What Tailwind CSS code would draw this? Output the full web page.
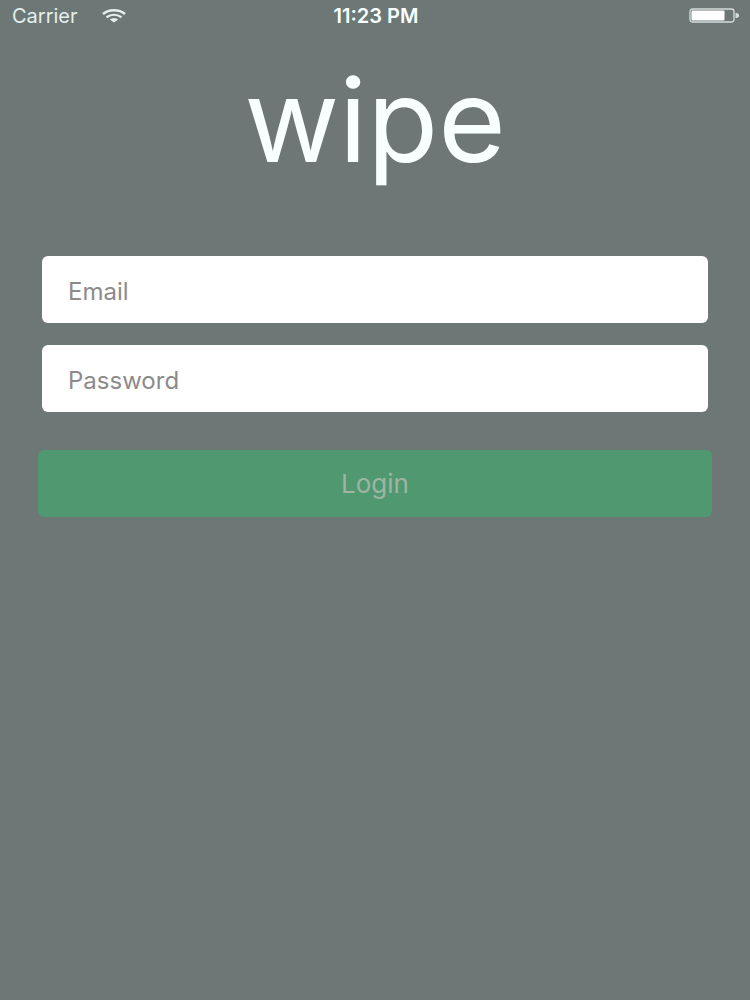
<!DOCTYPE html>
<html lang="en">

<head>
  <meta charset="UTF-8">
  <meta name="viewport" content="width=device-width, initial-scale=1">
  <title>wipe</title>
  <script src="https://cdn.jsdelivr.net/npm/@tailwindcss/browser@4"></script>
</head>

<body class="min-h-screen bg-[#6d7876] font-['Inter','Liberation_Sans',sans-serif] text-[#f8ffff]">

  <!-- Status bar -->
  <header class="grid h-8 grid-cols-3 items-center pl-3 pr-2.5 text-xl leading-8">
    <div class="flex items-center gap-6 text-[#e4efec]">
      <span>Carrier</span>
      <svg class="h-[14px] w-6" viewBox="0 0 24 14" fill="none" stroke="currentColor" stroke-width="2.4" aria-hidden="true">
        <path d="M1 5C7 0 17 0 23 5" />
        <path d="M4.500 8.300c4.500-3.200 10.500-3.200 15 0" />
        <path d="M12 13.600 7.800 10.600c2.200-1.800 6.200-1.800 8.400 0z" fill="currentColor" stroke="none" />
      </svg>
    </div>
    <span class="text-center font-semibold">11:23 PM</span>
    <svg class="h-4 w-[51px] justify-self-end" viewBox="0 0 51 16" aria-hidden="true">
      <rect x="1" y="1" width="44" height="13" rx="2.5" fill="none" stroke="#d3dcda" stroke-width="1.3" />
      <rect x="2.5" y="2.5" width="33" height="10" rx="1" fill="#fff" />
      <path d="M46.500 5c3 0 3.500 1.200 3.500 2.500s-.5 2.500-3.500 2.500z" fill="#d3dcda" />
    </svg>
  </header>

  <!-- Login -->
  <main class="px-[38px] pt-8">
    <h1 class="text-center text-[116px] leading-[112px]">wipe</h1>
    <form class="mt-20">
      <div class="flex flex-col gap-[22px] px-1">
        <input type="email" aria-label="Email" placeholder="Email" class="h-[67px] w-full rounded-md bg-white px-[26px] pt-1 text-2xl text-gray-800 outline-none placeholder:text-[#8d8a8c]">
        <input type="password" aria-label="Password" placeholder="Password" class="h-[67px] w-full rounded-md bg-white px-[26px] pt-1 text-2xl text-gray-800 outline-none placeholder:text-[#8d8a8c]">
      </div>
      <button type="submit" class="mt-[38px] h-[67px] w-full rounded-md bg-[#50986f] text-[26px] text-[#9eb5a3]">Login</button>
    </form>
  </main>

</body>

</html>
